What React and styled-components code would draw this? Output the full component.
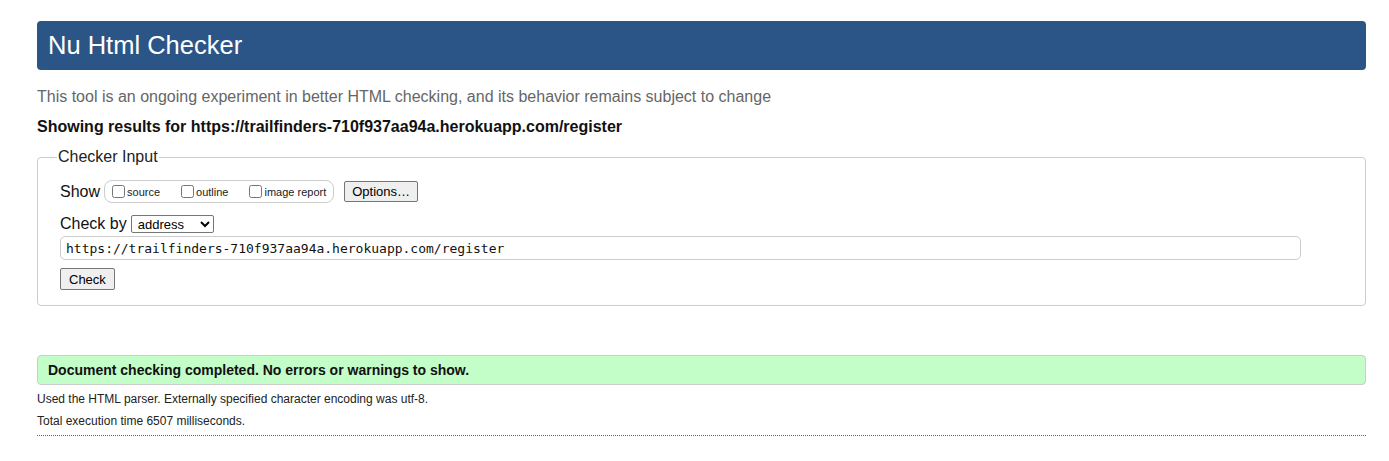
import React from 'react';
import styled, { createGlobalStyle } from 'styled-components';

const Global = createGlobalStyle`
  body {
    margin: 0;
    background: #fff;
    font-family: "Liberation Sans", Arial, sans-serif;
    color: #111;
  }
`;

const Page = styled.div`
  padding: 21px 23px 0 37px;
`;

const Header = styled.h1`
  margin: 0;
  height: 49px;
  display: flex;
  align-items: center;
  padding-left: 11px;
  background: #2b5587;
  border-radius: 4px;
  color: #fff;
  font-size: 25.5px;
  font-weight: normal;
`;

const Intro = styled.p`
  margin: 18px 0 0;
  color: #666;
  font-size: 16px;
`;

const Results = styled.p`
  margin: 12px 0 0;
  font-size: 16px;
  font-weight: bold;
`;

const Fieldset = styled.fieldset`
  margin: 12px 0 0;
  padding: 6px 22px 15px;
  border: 1px solid #ccc;
  border-radius: 4px;
`;

const Legend = styled.legend`
  padding: 0 1px;
  margin-left: -3px;
  font-size: 16px;
  color: #222;
`;

const Row = styled.div`
  display: flex;
  align-items: center;
  margin-top: ${p => p.$top || 0}px;
  font-size: 16px;
`;

const Group = styled.span`
  display: inline-flex;
  align-items: center;
  gap: 21px;
  margin-left: 4px;
  height: 21px;
  padding: 0 7px 0 7px;
  border: 1px solid #ccc;
  border-radius: 8px;
`;

const CheckLabel = styled.label`
  display: inline-flex;
  align-items: center;
  font-size: 11px;
  color: #222;
`;

const Box = styled.input.attrs({ type: 'checkbox' })`
  margin: 0 2px 0 0;
  width: 13px;
  height: 13px;
`;

const Button = styled.button`
  font-family: "Liberation Sans", Arial, sans-serif;
  font-size: 13px;
  height: ${p => p.$h || 21}px;
  padding: 0 ${p => p.$pad || 7}px;
  background: #efefef;
  border: 1px solid #767676;
  border-radius: 2px;
  color: #000;
  margin-left: ${p => p.$left || 0}px;
`;

const Select = styled.select`
  margin-left: 4px;
  height: 18px;
  width: 83px;
  font-family: "Liberation Sans", Arial, sans-serif;
  font-size: 13px;
  border: 1px solid #767676;
  border-radius: 2px;
  background: #fff;
  color: #000;
  padding: 0 2px;
`;

const UrlInput = styled.input`
  box-sizing: border-box;
  width: 1241px;
  height: 24px;
  margin-top: 3px;
  padding: 0 5px;
  border: 1px solid #ccc;
  border-radius: 5px;
  font-family: "DejaVu Sans Mono", Menlo, monospace;
  font-size: 13px;
  color: #111;
`;

const Status = styled.div`
  margin-top: 49px;
  height: 30px;
  box-sizing: border-box;
  display: flex;
  align-items: center;
  padding-left: 10px;
  background: #c3fdc8;
  border: 1px solid #ccc;
  border-radius: 4px;
  font-size: 14px;
  font-weight: bold;
`;

const Note = styled.p`
  margin: ${p => p.$top}px 0 0;
  font-size: 12px;
  color: #222;
`;

const Rule = styled.hr`
  margin: 7px 0 0;
  border: 0;
  border-top: 1px dotted #666;
`;

export default function App() {
  const url = 'https://trailfinders-710f937aa94a.herokuapp.com/register';
  return (
    <Page>
      <Global />
      <Header>Nu Html Checker</Header>
      <Intro>This tool is an ongoing experiment in better HTML checking, and its behavior remains subject to change</Intro>
      <Results>Showing results for {url}</Results>
      <Fieldset>
        <Legend>Checker Input</Legend>
        <Row $top={8}>
          Show
          <Group>
            <CheckLabel><Box />source</CheckLabel>
            <CheckLabel><Box />outline</CheckLabel>
            <CheckLabel><Box />image report</CheckLabel>
          </Group>
          <Button $left={10}>Options…</Button>
        </Row>
        <Row $top={12}>
          Check by
          <Select defaultValue="address">
            <option value="address">address</option>
            <option value="upload">file upload</option>
            <option value="text">text input</option>
          </Select>
        </Row>
        <UrlInput defaultValue={url} />
        <Row $top={8}>
          <Button $pad={8} $h={22}>Check</Button>
        </Row>
      </Fieldset>
      <Status>Document checking completed. No errors or warnings to show.</Status>
      <Note $top={7}>Used the HTML parser. Externally specified character encoding was utf-8.</Note>
      <Note $top={8}>Total execution time 6507 milliseconds.</Note>
      <Rule />
    </Page>
  );
}
